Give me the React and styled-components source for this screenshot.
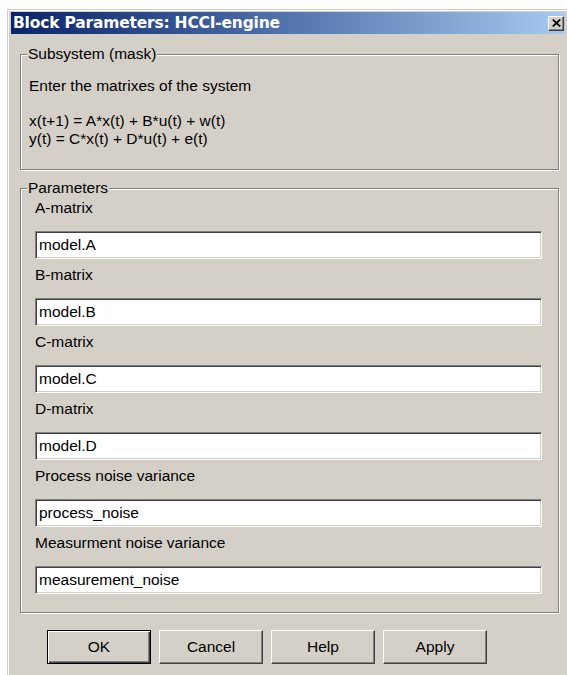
import React from 'react'
import styled, { createGlobalStyle } from 'styled-components'

const GlobalStyle = createGlobalStyle`
  html, body {
    margin: 0;
    padding: 0;
    background: #ffffff;
  }
  body {
    font-family: 'Liberation Sans', Arial, sans-serif;
    font-size: 15.5px;
    color: #000000;
  }
`

const FIELDS = [
  { label: 'A-matrix', value: 'model.A' },
  { label: 'B-matrix', value: 'model.B' },
  { label: 'C-matrix', value: 'model.C' },
  { label: 'D-matrix', value: 'model.D' },
  { label: 'Process noise variance', value: 'process_noise' },
  { label: 'Measurment noise variance', value: 'measurement_noise' },
]

const BUTTONS = [
  { text: 'OK', primary: true },
  { text: 'Cancel' },
  { text: 'Help' },
  { text: 'Apply' },
]

const CloseGlyph = () => (
  <svg width='9' height='8' viewBox='0 0 9 8'>
    <path d='M0.8 0.5 L8.2 7.5 M8.2 0.5 L0.8 7.5' stroke='#000' strokeWidth='1.8' fill='none' />
  </svg>
)

const App = () => {
  return (
    <>
      <GlobalStyle />
      <Window>
        <TitleBar>
          <h1>Block Parameters: HCCI-engine</h1>
          <CloseButton aria-label='Close'>
            <CloseGlyph />
          </CloseButton>
        </TitleBar>
        <Body>
          <Group $top={20} $pad='22px 8px 22px 8px'>
            <Caption>Subsystem (mask)</Caption>
            <Description>
              <p>Enter the matrixes of the system</p>
              <p>&nbsp;</p>
              <p>x(t+1) = A*x(t) + B*u(t) + w(t)</p>
              <p>y(t) = C*x(t) + D*u(t) + e(t)</p>
            </Description>
          </Group>
          <Group $top={18} $pad='3px 16px 18px 14px'>
            <Caption>Parameters</Caption>
            {FIELDS.map((f) => (
              <Field key={f.label}>
                <label>{f.label}</label>
                <TextBox defaultValue={f.value} spellCheck={false} />
              </Field>
            ))}
          </Group>
          <ButtonRow>
            {BUTTONS.map((b) => (
              <Button key={b.text} $primary={b.primary}>
                {b.text}
              </Button>
            ))}
          </ButtonRow>
        </Body>
      </Window>
    </>
  )
}

const Window = styled.div`
  margin: 9px 0 0 7px;
  min-height: 666px;
  box-sizing: border-box;
  background: #d4d0c8;
  border-top: 1px solid #d4d0c8;
  border-left: 1px solid #d4d0c8;
  box-shadow: inset 1px 1px 0 #ffffff;
  padding: 2px 2px 0 3px;
`

const TitleBar = styled.div`
  height: 22px;
  display: flex;
  align-items: center;
  justify-content: space-between;
  padding: 0 1px 0 2px;
  background: linear-gradient(to right, #0a246a 0%, #3a5a98 35%, #a6caf0 100%);

  h1 {
    margin: 0;
    font-family: 'DejaVu Sans', Tahoma, sans-serif;
    font-weight: 700;
    font-size: 15.5px;
    letter-spacing: -0.2px;
    color: #ffffff;
    white-space: nowrap;
  }
`

const CloseButton = styled.button`
  width: 16px;
  height: 15px;
  padding: 0;
  display: flex;
  align-items: center;
  justify-content: center;
  background: #d4d0c8;
  border: 1px solid;
  border-color: #ffffff #404040 #404040 #ffffff;
  box-shadow: inset -1px -1px 0 #808080;
`

const Body = styled.div`
  display: flex;
  flex-direction: column;
  padding: 0 6px 0 9px;
`

const Group = styled.div`
  position: relative;
  margin-top: ${(p) => p.$top}px;
  padding: ${(p) => p.$pad};
  border: 1px solid #808080;
  box-shadow: inset 1px 1px 0 #ffffff, 1px 1px 0 #ffffff;
`

const Caption = styled.span`
  position: absolute;
  top: -10px;
  left: 6px;
  padding: 0 1px;
  line-height: 18px;
  background: #d4d0c8;
`

const Description = styled.div`
  p {
    margin: 0;
    line-height: 17.5px;
    white-space: nowrap;
  }
`

const Field = styled.div`
  display: flex;
  flex-direction: column;

  label {
    line-height: 18px;
    margin: 7px 0 14px;
  }
`

const TextBox = styled.input`
  height: 28px;
  box-sizing: border-box;
  padding: 0 3px;
  font-family: 'Liberation Sans', Arial, sans-serif;
  font-size: 15.5px;
  color: #000000;
  background: #ffffff;
  border: 1px solid;
  border-color: #808080 #ffffff #ffffff #808080;
  box-shadow: inset 1px 1px 0 #404040, inset -1px -1px 0 #d4d0c8;
  outline: none;
`

const ButtonRow = styled.div`
  display: flex;
  gap: 8px;
  margin: 17px 0 12px 27px;
`

const Button = styled.button`
  width: 104px;
  height: 34px;
  box-sizing: border-box;
  font-family: 'Liberation Sans', Arial, sans-serif;
  font-size: 15.5px;
  color: #000000;
  background: #d4d0c8;
  border: 1px solid;
  border-color: ${(p) => (p.$primary ? '#000000' : '#ffffff #404040 #404040 #ffffff')};
  box-shadow: ${(p) =>
    p.$primary
      ? 'inset 1px 1px 0 #ffffff, inset -1px -1px 0 #404040, inset -2px -2px 0 #808080'
      : 'inset -1px -1px 0 #808080'};
`

export default App
